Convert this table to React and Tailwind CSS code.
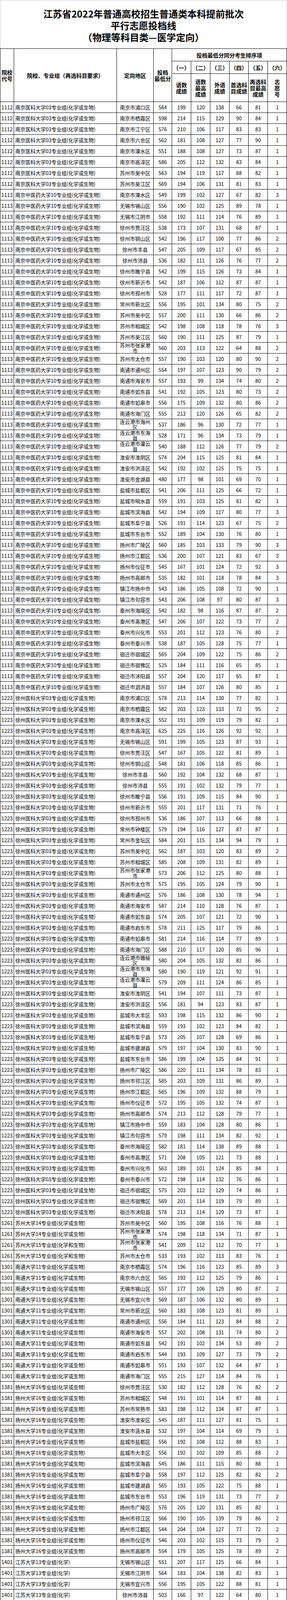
const groups = [
  {
    code: '1112',
    name: '南京医科大学03专业组(化学或生物)',
    rows: `南京市浦口区 564 199 120 138 66 81 1
南京市栖霞区 598 214 115 129 90 84 1
南京市江宁区 576 210 106 117 83 83 1
南京市六合区 562 181 108 127 77 90 1
南京市溧水区 551 188 108 127 73 87 1
南京市高淳区 586 205 112 132 83 84 1
苏州市吴中区 563 194 119 117 88 82 1
苏州市吴江区 569 194 106 131 81 83 1`,
  },
  {
    code: '1113',
    name: '南京中医药大学10专业组(化学或生物)',
    rows: `南京市溧水区 549 199 102 127 67 82 3
无锡市锡山区 556 190 102 125 89 78 1
无锡市江阴市 558 192 111 114 76 89 1
徐州市贾汪区 538 173 107 131 68 87 1
徐州市铜山区 542 196 117 100 77 86 2
徐州市丰县 547 205 109 117 67 85 2
徐州市沛县 536 182 111 126 76 77 2
徐州市睢宁县 542 199 115 126 73 84 1
徐州市新沂市 542 187 106 112 87 87 1
徐州市邳州市 528 177 111 117 72 87 1
常州市新北区 556 195 101 134 80 75 2
苏州市吴中区 557 200 111 130 66 86 2
苏州市相城区 542 198 108 118 78 76 3
苏州市吴江区 560 190 111 125 87 79 1
苏州市张家港市 560 203 113 122 64 88 2
苏州市太仓市 557 190 103 120 80 90 2
南通市通州区 554 197 107 123 90 79 2
南通市海安市 557 193 99 134 74 80 2
南通市如东县 541 192 105 123 80 73 2
南通市如皋市 556 175 109 132 80 86 2
南通市海门区 555 213 120 126 65 82 2
连云港市海州区 537 186 96 130 72 77 1
连云港市东海县 528 171 96 134 73 79 1
连云港市灌云县 540 188 112 126 77 79 2
淮安市淮阴区 574 204 115 125 81 84 1
淮安市洪泽区 542 192 102 125 75 75 1
淮安市金湖县 480 177 98 101 69 70 1
盐城市盐都区 541 206 111 125 66 72 1
盐城市响水县 559 191 103 125 81 82 1
盐城市滨海县 542 194 109 117 80 77 3
盐城市阜宁县 526 191 114 123 67 75 2
盐城市东台市 552 189 104 130 76 80 1
扬州市广陵区 560 185 103 133 79 90 3
扬州市江都区 536 200 107 121 83 67 3
扬州市仪征市 545 167 101 124 72 92 3
扬州市高邮市 535 182 101 118 78 84 3
镇江市扬中市 543 186 105 108 72 90 1
镇江市句容市 543 206 108 97 80 87 3
泰州市海陵区 542 182 98 116 87 87 2
泰州市高港区 547 206 107 122 73 77 2
泰州市兴化市 553 201 112 123 76 80 2
泰州市泰兴市 538 187 105 128 75 77 1
宿迁市宿城区 565 204 109 122 75 86 2
宿迁市宿豫区 525 184 111 116 65 85 1
宿迁市沭阳县 557 204 120 117 65 87 1
宿迁市泗洪县 557 184 107 126 80 85 1`,
  },
  {
    code: '1223',
    name: '徐州医科大学03专业组(化学或生物)',
    rows: `南京市浦口区 578 213 114 130 77 82 1
南京市栖霞区 582 203 123 133 72 95 2
南京市溧水区 552 191 109 119 79 82 1
南京市高淳区 625 225 116 126 92 92 1
无锡市锡山区 591 199 105 123 87 93 1
徐州市贾汪区 547 167 105 122 81 89 1
徐州市铜山区 548 181 106 118 85 86 1
徐州市丰县 560 192 104 132 68 87 1
徐州市沛县 555 191 102 132 79 77 1
徐州市睢宁县 556 191 109 115 84 90 1
徐州市新沂市 555 201 117 131 71 76 1
徐州市邳州市 536 186 107 113 66 88 1
常州市钟楼区 579 194 116 127 87 87 1
常州市金坛区 584 201 115 134 94 79 1
苏州市吴中区 562 187 103 120 83 89 2
苏州市相城区 585 208 109 131 82 89 1
苏州市张家港市 573 206 112 125 80 88 1
苏州市太仓市 575 195 105 124 79 90 1
南通市通州区 576 186 108 130 78 94 1
南通市海安市 587 214 110 128 76 87 1
南通市如东县 574 205 107 121 72 90 1
南通市启东市 578 211 125 117 79 86 1
南通市如皋市 581 214 116 114 77 89 1
南通市海门区 588 210 117 120 85 96 1
连云港市赣榆区 580 204 105 132 82 86 1
连云港市东海县 580 190 119 121 92 91 1
连云港市灌云县 579 209 111 124 86 85 1
淮安市淮阴区 541 194 107 111 73 87 1
淮安市洪泽区 556 181 94 123 83 87 1
盐城市大丰区 593 198 115 132 86 90 1
盐城市滨海县 559 193 102 123 84 82 1
盐城市阜宁县 573 205 107 128 69 86 1
盐城市建湖县 579 197 104 130 83 90 1
盐城市东台市 586 199 104 135 84 91 1
扬州市广陵区 586 220 111 134 78 83 1
扬州市邗江区 585 203 109 131 86 89 1
扬州市江都区 565 196 109 132 88 79 1
扬州市仪征市 572 195 105 132 74 87 1
扬州市高邮市 574 213 112 128 79 77 1
镇江市扬中市 559 183 104 128 80 86 1
镇江市句容市 579 198 111 134 82 92 1
泰州市海陵区 582 181 114 138 89 88 1
泰州市高港区 571 208 105 121 73 88 1
泰州市兴化市 563 189 101 124 85 84 1
泰州市泰兴市 572 198 114 132 76 86 1
宿迁市宿城区 575 203 112 129 74 86 1
宿迁市宿豫区 569 201 114 119 79 89 1
宿迁市沭阳县 578 213 114 129 73 87 1`,
  },
  {
    code: '1261',
    name: '苏州大学14专业组(化学或生物)',
    rows: `苏州市吴中区 560 195 108 116 76 88 1
苏州市张家港市 574 198 118 134 71 87 1`,
  },
  {
    code: '1261',
    name: '苏州大学15专业组(化学和生物)',
    rows: `苏州市张家港市 541 209 112 112 70 77 1
苏州市太仓市 533 193 102 113 83 76 1`,
  },
  {
    code: '1301',
    name: '南通大学11专业组(化学或生物)',
    rows: `南京市栖霞区 574 196 116 123 85 89 3
南京市六合区 565 193 112 125 79 86 1
无锡市锡山区 557 177 106 129 80 87 2
无锡市宜兴市 569 187 106 132 80 89 1
常州市新北区 560 183 108 123 81 89 1
南通市通州区 556 184 111 123 84 88 2
南通市海安市 557 202 108 131 74 80 2
南通市如东县 542 191 102 134 53 89 2
南通市启东市 544 193 109 127 73 79 2
南通市如皋市 551 193 107 132 64 87 1
南通市海门区 555 215 127 114 84 76 1`,
  },
  {
    code: '1381',
    name: '扬州大学16专业组(化学或生物)',
    rows: `徐州市贾汪区 530 182 112 128 76 82 2
苏州市相城区 548 191 101 114 87 88 1
苏州市常熟市 583 198 112 134 87 87 1
淮安市淮安区 545 187 111 127 81 75 1
淮安市涟水县 532 197 104 114 69 79 1
盐城市盐都区 556 192 108 112 88 83 1
盐城市大丰区 556 192 102 109 85 88 2
盐城市滨海县 545 186 111 115 80 88 1
盐城市阜宁县 558 197 112 125 82 82 2
盐城市建湖县 565 193 105 122 75 88 1
盐城市东台市 553 196 119 131 73 77 2
扬州市广陵区 576 205 120 131 85 82 1
扬州市邗江区 566 190 105 139 79 86 2
扬州市江都区 544 204 104 127 77 72 2
扬州市仪征市 546 203 102 115 73 79 2
扬州市高邮市 554 179 105 125 78 89 2`,
  },
  {
    code: '1401',
    name: '江苏大学13专业组(化学)',
    rows: `无锡市锡山区 551 207 117 125 66 84 1
无锡市江阴市 564 183 104 138 82 83 1
无锡市宜兴市 556 195 105 122 88 81 1
徐州市沛县 503 166 97 122 64 80 1
常州市钟楼区 576 207 111 113 84 87 1
常州市新北区 553 200 101 130 80 73 1
常州市武进区 563 196 110 119 83 90 1
常州市金坛区 560 196 112 127 73 86 2
常州市溧阳市 540 186 108 119 87 74 1
南通市通州区 532 178 103 117 77 85 3
镇江市丹徒区 543 188 103 111 75 87 1
镇江市丹阳市 542 187 103 106 83 87 1
镇江市扬中市 534 195 115 117 76 77 1
镇江市句容市 552 191 105 127 75 80 2`,
  },
  {
    code: '1846',
    name: '南京医科大学康达学院02专业组(化学或生',
    name2: '物)',
    // 从第21行起单元格左上角有绿色小三角
    markFrom: 20,
    rows: `徐州市贾汪区 515 170 88 101 75 88 4
徐州市铜山区 529 178 111 121 73 84 3
徐州市丰县 524 188 108 118 63 83 2
徐州市沛县 492 191 109 95 67 73 1
徐州市邳州市 509 165 109 117 71 80 3
常州市钟楼区 547 190 112 128 82 74 2
常州市武进区 554 201 110 129 81 80 1
常州市金坛区 573 199 104 129 72 88 2
苏州市相城区 525 185 108 119 64 87 3
苏州市吴江区 548 187 100 123 75 89 1
苏州市太仓市 538 181 115 116 70 89 3
南通市如皋市 538 182 108 132 70 80 4
连云港市连云区 504 173 106 113 68 79 1
连云港市海州区 503 170 102 123 75 74 1
连云港市赣榆区 530 192 116 117 80 74 1
连云港市东海县 526 186 110 114 75 79 2
连云港市灌云县 486 163 93 125 57 73 1
淮安市淮安区 527 182 101 111 66 85 2
淮安市洪泽区 509 187 106 118 70 69 2
淮安市金湖县 475 179 107 94 53 82 2
盐城市盐都区 553 199 109 116 79 80 2
盐城市大丰区 545 178 106 121 82 88 3
盐城市响水县 528 198 111 110 80 70 1
盐城市阜宁县 520 185 99 99 73 89 4
盐城市东台市 533 183 100 122 68 87 3
扬州市广陵区 575 196 107 134 87 79 3
扬州市邗江区 546 198 114 130 79 77 2
扬州市仪征市 537 186 111 120 71 84 4
扬州市高邮市 511 174 112 132 47 83 4
镇江市丹徒区 540 181 112 135 76 76 2
镇江市丹阳市 530 190 114 120 71 75 2
镇江市扬中市 518 179 110 119 82 73 3
镇江市句容市 535 188 101 115 82 75 2
泰州市海陵区 532 198 112 97 77 86 2
泰州市高港区 511 177 107 120 66 85 1
泰州市姜堰区 560 203 107 110 71 90 1
泰州市兴化市 510 177 96 117 64 82 1
泰州市靖江市 545 185 103 118 83 93 1
泰州市泰兴市 521 200 109 119 79 63 3
宿迁市宿城区 526 172 109 122 81 84 3
宿迁市宿豫区 488 175 101 106 61 77 1
宿迁市沭阳县 511 166 103 106 77 86 1
宿迁市泗阳县 552 187 103 120 75 87 1
宿迁市泗洪县 522 182 110 117 74 81 1`,
  },
]

const rows = groups.flatMap(g =>
  g.rows.split('\n').map((line, i) => {
    const [region, ...nums] = line.trim().split(' ')
    return {
      code: g.code,
      name: g.name,
      name2: g.name2,
      mark: g.markFrom !== undefined && i >= g.markFrom,
      region,
      nums,
    }
  })
)

const subHeads = ['（一）', '（二）', '（三）', '（四）', '（五）', '（六）']
const subItems = [
  ['语数', '成绩'],
  ['语数', '最高', '成绩'],
  ['外语', '成绩'],
  ['首选科', '目成绩'],
  ['再选科', '目最高', '成绩'],
  ['志', '愿', '号'],
]

function Lines({ items }) {
  return items.map((t, i) => (
    <span key={i} className="block">{t}</span>
  ))
}

function HeaderRow() {
  return (
    <div className="flex h-[136px] border-b border-black font-bold text-[14px] leading-[16px] text-center">
      <div className="w-[35px] shrink-0 border-r border-black flex flex-col items-center justify-center">
        <Lines items={['院校', '代号']} />
      </div>
      <div className="w-[263px] shrink-0 border-r border-black flex items-center justify-center">
        院校、专业组（再选科目要求）
      </div>
      <div className="w-[94px] shrink-0 border-r border-black flex items-center justify-center">
        定向地区
      </div>
      <div className="w-[47px] shrink-0 border-r border-black flex flex-col items-center justify-center">
        <Lines items={['投档', '最低分']} />
      </div>
      <div className="w-[294px] shrink-0 flex flex-col">
        <div className="h-[32px] border-b border-r border-black flex items-center justify-center">
          投档最低分同分考生排序项
        </div>
        <div className="h-[32px] border-b border-black flex">
          {subHeads.map(h => (
            <div key={h} className="w-[49px] shrink-0 border-r border-black flex items-center justify-center">
              {h}
            </div>
          ))}
        </div>
        <div className="flex-1 flex">
          {subItems.map((s, i) => (
            <div key={i} className="w-[49px] shrink-0 border-r border-black flex flex-col items-center justify-center">
              <Lines items={s} />
            </div>
          ))}
        </div>
      </div>
    </div>
  )
}

function DataRow({ row }) {
  return (
    <div className="flex h-[28px] border-b border-black text-[13px] leading-[14px]">
      <div className="relative w-[35px] shrink-0 border-r border-black flex items-center justify-center">
        {row.mark && (
          <span className="absolute left-0 top-0 w-0 h-0 border-t-[5px] border-r-[5px] border-t-[#008a00] border-r-transparent" />
        )}
        {row.code}
      </div>
      <div className="w-[263px] shrink-0 border-r border-black flex items-center pl-[3px] whitespace-nowrap">
        {row.name2 ? (
          <span>
            {row.name}
            <br />
            {row.name2}
          </span>
        ) : (
          row.name
        )}
      </div>
      <div className="w-[94px] shrink-0 border-r border-black flex items-center justify-center px-[3px] text-center">
        {row.region}
      </div>
      <div className="w-[47px] shrink-0 border-r border-black flex items-center justify-center">
        {row.nums[0]}
      </div>
      {row.nums.slice(1).map((n, i) => (
        <div key={i} className="w-[49px] shrink-0 border-r border-black flex items-center justify-center">
          {n}
        </div>
      ))}
    </div>
  )
}

export default function App() {
  return (
    <div className="w-[734px] bg-white text-black font-['Noto_Sans_CJK_SC','Noto_Sans',sans-serif]">
      {/* 标题 */}
      <div className="h-[124px] border-t border-l border-r border-[#c8c8c8] pt-[19px] text-center text-[24px] leading-[30px] font-bold">
        <div>江苏省2022年普通高校招生普通类本科提前批次</div>
        <div>平行志愿投档线</div>
        <div>（物理等科目类—医学定向）</div>
      </div>

      {/* 表格 */}
      <div className="border-t border-l border-black">
        <HeaderRow />
        {rows.map((r, i) => (
          <DataRow key={i} row={r} />
        ))}
      </div>
      <div className="flex h-[3px] border-l border-[#c8c8c8]">
        {[35, 263, 94, 47, 49, 49, 49, 49, 49, 49].map((w, i) => (
          <div key={i} style={{ width: w }} className="shrink-0 border-r border-[#9a9a9a]" />
        ))}
      </div>

      {/* 注释 */}
      <div className="w-[731px] h-[71px] border border-[#c8c8c8] pt-[9px] pl-[4px] text-[15px] leading-[17.5px]">
        <div className="whitespace-nowrap">
          <span className="font-bold">注：</span>在投档过程中，普通类考生投档分相同时，依次按语文数学两科之和、语文或数学单科最高成绩、外语单
        </div>
        <div className="whitespace-nowrap">
          科成绩、首选科目单科成绩、再选科目单科最高成绩由高到低排序投档；如仍相同，比较考生志愿顺序，顺序
        </div>
        <div className="whitespace-nowrap">在前者优先投档，志愿顺序相同则全部投档。</div>
      </div>
    </div>
  )
}
